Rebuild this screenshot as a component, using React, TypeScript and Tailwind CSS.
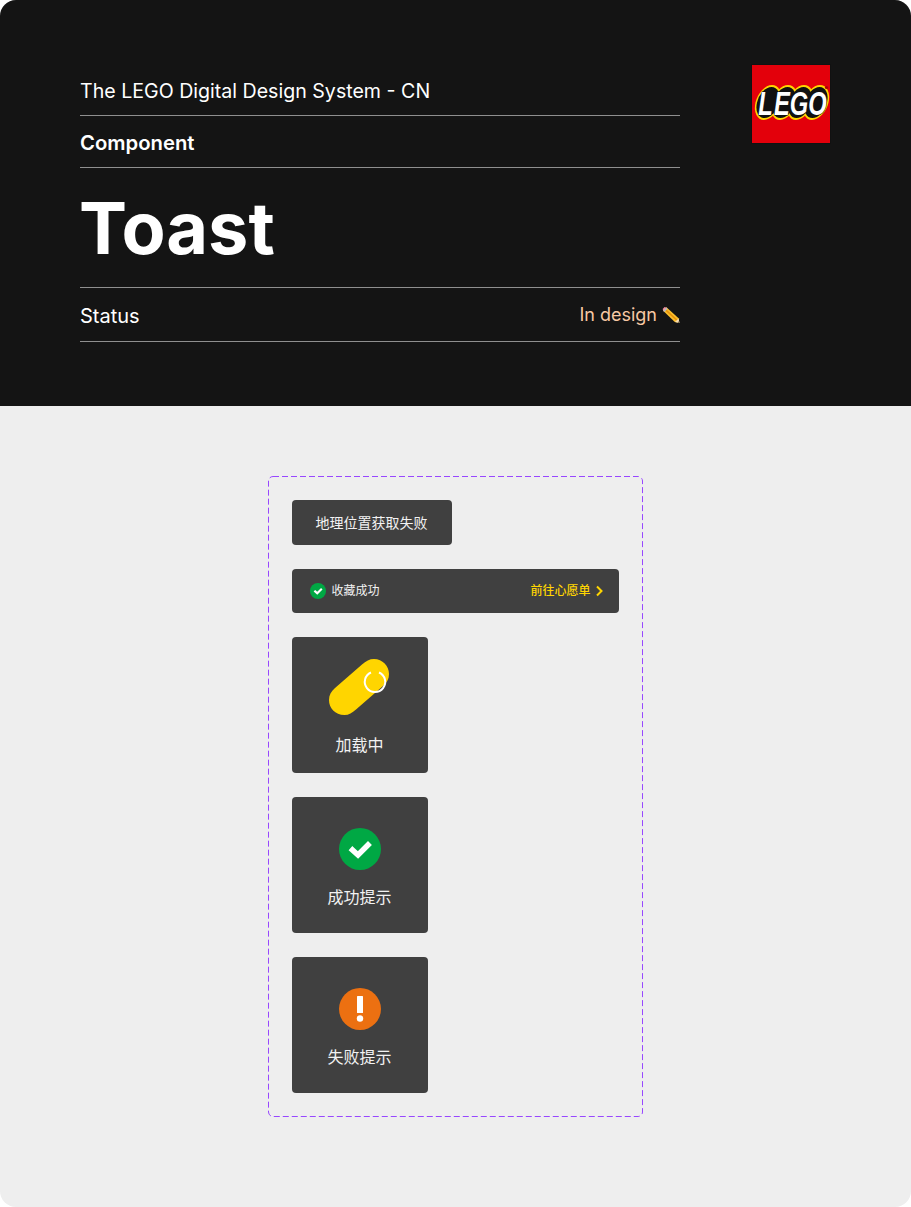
const sans = { fontFamily: 'Inter, "Noto Sans CJK SC", sans-serif' }

const logoLetters = [
  { ch: 'L', x: 14.5 },
  { ch: 'E', x: 31 },
  { ch: 'G', x: 48 },
  { ch: 'O', x: 66.5 },
]

const lobes = [8, 24, 40, 56]

function LegoLogo() {
  return (
    <svg width="80" height="80" viewBox="0 0 80 80" className="shrink-0">
      <rect x="0.5" y="0.5" width="79" height="79" fill="#e3000b" stroke="#111" />
      {/* scalloped yellow and black backing behind the letters */}
      <g transform="translate(9 38.5) skewX(-13)">
        {lobes.map((cx) => (
          <ellipse key={cx} cx={cx} cy="0" rx="12.5" ry="17.5" fill="#ffd500" />
        ))}
        {lobes.map((cx) => (
          <ellipse key={cx} cx={cx} cy="0" rx="11" ry="15.5" fill="#111" />
        ))}
      </g>
      <g fontFamily="'Liberation Sans', sans-serif" fontWeight="700" fontStyle="italic" fontSize="33" fill="#fff" stroke="#111" strokeWidth="1" strokeLinejoin="round" paintOrder="stroke">
        {logoLetters.map((l) => (
          <text key={l.ch} textAnchor="middle" transform={`translate(${l.x} 50.5) scale(0.72 1)`}>
            {l.ch}
          </text>
        ))}
      </g>
      <circle cx="75.5" cy="23.5" r="1.6" fill="#a8000a" />
    </svg>
  )
}

function Pencil() {
  return (
    <svg width="18" height="18" viewBox="0 0 18 18" className="shrink-0">
      <path d="M4.4 1.2 L16.6 12.2 L17.4 17 L12.8 16 L0.9 4.6 Z" fill="#fbc02d" />
      <path d="M2.6 2.9 L14.8 14.2" stroke="#e8930c" strokeWidth="1.6" />
      <path d="M2.6 0.9 L5.2 1.9 L1.7 5.4 L0.6 3 Z" fill="#f48fa0" />
      <path d="M4.4 1.6 L1.2 4.8 L2.4 6 L5.6 2.8 Z" fill="#b8bcc0" />
      <path d="M13 16 L16.6 12.6 L17.4 17 Z" fill="#f6dcb4" />
      <path d="M15.6 16.6 L17.4 17 L17 15.2 Z" fill="#444" />
    </svg>
  )
}

function CheckBadge({ size }: { size: number }) {
  return (
    <svg width={size} height={size} viewBox="0 0 42 42">
      <circle cx="21" cy="21" r="21" fill="#00a844" />
      <path d="M13.5 22 L19 27 L29 17" fill="none" stroke="#fff" strokeWidth="5.5" strokeLinecap="square" />
    </svg>
  )
}

function AlertBadge() {
  return (
    <svg width="42" height="42" viewBox="0 0 42 42">
      <circle cx="21" cy="21" r="21" fill="#ec7011" />
      <rect x="18" y="8" width="6" height="17" rx="0.5" fill="#fff" />
      <circle cx="21" cy="30.5" r="3.2" fill="#fff" />
    </svg>
  )
}

function Spinner() {
  return (
    <svg width="60" height="56" viewBox="0 0 60 56">
      <path d="M15.5 56 C6 56 0 49 0 41 C0 36 2 32.5 6 29 L33 5.5 C37 2 40.5 0 45 0 C53.5 0 60 7 60 15 C60 20 58 23.5 54 27 L27 50.5 C23 54 20 56 15.5 56 Z" fill="#ffd500" />
      <path d="M42 13.5 A10.2 10.2 0 1 0 50 13.5" fill="none" stroke="#fff" strokeWidth="2" />
    </svg>
  )
}

function SquareToast({ icon, label, iconClass }: { icon: React.ReactNode; label: string; iconClass: string }) {
  return (
    <div className="w-[136px] h-[136px] rounded bg-[#404040] flex flex-col items-center">
      <div className={iconClass}>{icon}</div>
      <span className="text-base leading-[22px] text-[#f2f2f2]">{label}</span>
    </div>
  )
}

export default function App() {
  return (
    <div className="w-[911px] h-[1207px] bg-white" style={sans}>
      <div className="h-full rounded-2xl overflow-hidden bg-[#eeeeee] flex flex-col">
        <header className="h-[406px] bg-[#141414] px-20 flex justify-between text-white shrink-0">
          <div className="w-[600px]">
            <div className="h-[116px] pt-[68px] border-b border-[#8f8f8f] text-[19.6px]">
              <div className="h-[47px] flex items-center">The LEGO Digital Design System - CN</div>
            </div>
            <div className="h-[52px] pt-[3px] border-b border-[#8f8f8f] flex items-center text-[20.3px] font-semibold">
              Component
            </div>
            <div className="h-[120px] border-b border-[#8f8f8f] flex items-center text-[72px] font-bold leading-none">
              <span className="-ml-px pt-px">Toast</span>
            </div>
            <div className="h-[54px] pt-[3px] border-b border-[#8f8f8f] flex items-center justify-between text-[20px]">
              <span>Status</span>
              <span className="flex items-center gap-[5px] text-[#f8c9a4] text-[18px] -mt-[3px]">
                In design <Pencil />
              </span>
            </div>
          </div>
          <div className="pt-[64px]">
            <LegoLogo />
          </div>
        </header>
        <main className="flex-1 flex justify-center pt-[70px]">
          <div className="relative w-[375px] h-[641px] -ml-px p-6 flex flex-col gap-6 items-start">
            <svg width="375" height="641" className="absolute inset-0" fill="none">
              <rect x="0.5" y="0.5" width="374" height="640" rx="4.5" stroke="#9747ff" strokeDasharray="6 3" />
            </svg>
            <div className="relative w-[160px] h-[45px] rounded bg-[#404040] flex items-center justify-center text-sm text-[#f2f2f2]">
              地理位置获取失败
            </div>
            <div className="relative w-[327px] h-[44px] rounded bg-[#404040] flex items-center justify-between pl-[18px] pr-[15px]">
              <div className="flex items-center gap-[6px] text-xs text-[#f2f2f2]">
                <CheckBadge size={16} />
                <span>收藏成功</span>
              </div>
              <div className="flex items-center gap-[4px] text-xs font-medium text-[#ffd500]">
                <span>前往心愿单</span>
                <svg width="9" height="12" viewBox="0 0 9 12">
                  <path d="M2 1.5 L6.5 6 L2 10.5" fill="none" stroke="#ffd500" strokeWidth="2" />
                </svg>
              </div>
            </div>
            <SquareToast icon={<Spinner />} label="加载中" iconClass="mt-[22px] mb-[19px] mr-[2px] h-[56px]" />
            <SquareToast icon={<CheckBadge size={42} />} label="成功提示" iconClass="mt-[31px] mb-[16px] h-[42px]" />
            <SquareToast icon={<AlertBadge />} label="失败提示" iconClass="mt-[31px] mb-[16px] h-[42px]" />
          </div>
        </main>
      </div>
    </div>
  )
}
